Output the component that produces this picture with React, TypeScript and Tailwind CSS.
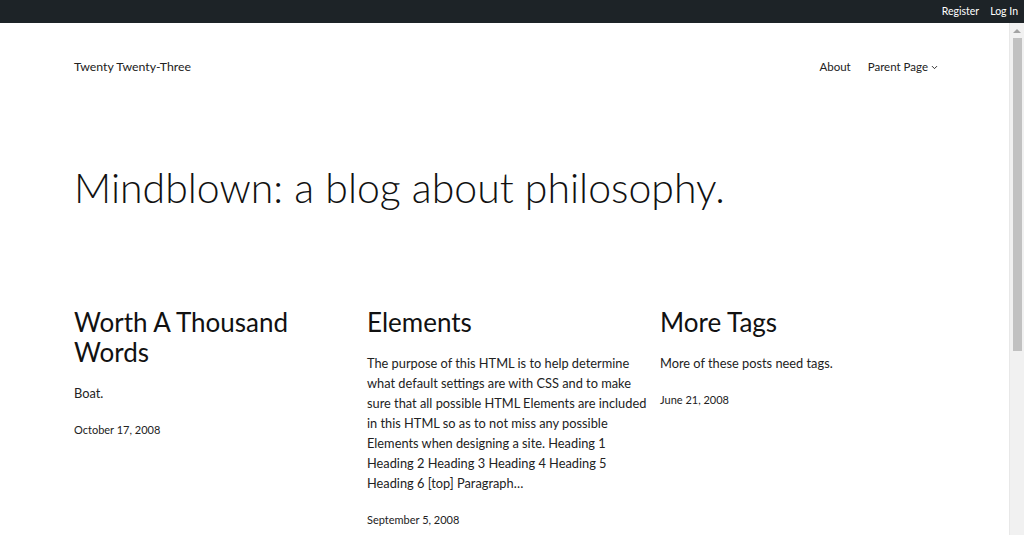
import { ChevronDown } from 'lucide-react';

interface PostProps {
  title: string;
  excerpt: string;
  date: string;
}

const posts: PostProps[] = [
  { title: 'Worth A Thousand Words', excerpt: 'Boat.', date: 'October 17, 2008' },
  {
    title: 'Elements',
    // line breaks follow the original wrap
    excerpt:
      'The purpose of this HTML is to help determine\nwhat default settings are with CSS and to make\nsure that all possible HTML Elements are included\nin this HTML so as to not miss any possible\nElements when designing a site. Heading 1\nHeading 2 Heading 3 Heading 4 Heading 5\nHeading 6 [top] Paragraph…',
    date: 'September 5, 2008',
  },
  { title: 'More Tags', excerpt: 'More of these posts need tags.', date: 'June 21, 2008' },
];

const PostCard = ({ title, excerpt, date }: PostProps) => (
  <article>
    <h2 className="text-[26px] leading-[30px] text-[#111]">{title}</h2>
    <p className="mt-[16px] whitespace-pre text-[12.8px] leading-[20px] text-[#222]">{excerpt}</p>
    <div className="mt-[17px] text-[11px] leading-[20px] text-[#222]">{date}</div>
  </article>
);

export default function App() {
  return (
    <div className="h-screen flex flex-col bg-white font-['Lato',sans-serif] text-[#111]">
      {/* admin bar */}
      <div className="h-[23px] shrink-0 bg-[#1d2327] flex items-center justify-end gap-[11px] pr-[6px] text-[10.5px] text-white">
        <span>Register</span>
        <span>Log In</span>
      </div>

      <div className="flex-1 flex min-h-0">
        <div className="flex-1 overflow-hidden">
          <div className="pl-[74px] pr-[70px]">
            <header className="h-[88px] flex items-center justify-between">
              <div className="text-[12.3px] text-[#222]">Twenty Twenty-Three</div>
              <nav className="flex items-center gap-[17px] text-[11.5px] text-[#222]">
                <span>About</span>
                <span className="flex items-center gap-[2px]">
                  Parent Page
                  <ChevronDown size={9} strokeWidth={2.5} />
                </span>
              </nav>
            </header>

            <h1 className="mt-[49px] text-[41px] leading-[56px] font-light text-[#111]">
              Mindblown: a blog about philosophy.
            </h1>

            <div className="mt-[91px] grid grid-cols-3 gap-[14px] pb-[120px]">
              {posts.map((p) => (
                <PostCard key={p.title} {...p} />
              ))}
            </div>
          </div>
        </div>

        {/* scrollbar */}
        <div className="w-[15px] shrink-0 bg-[#f1f1f1] flex flex-col items-center border-l border-[#e8e8e8]">
          <div className="h-[15px] flex items-center justify-center">
            <div className="w-0 h-0 border-l-[4px] border-r-[4px] border-b-[4px] border-l-transparent border-r-transparent border-b-[#a3a3a3]" />
          </div>
          <div className="w-[9px] h-[313px] bg-[#c1c1c1]" />
        </div>
      </div>
    </div>
  );
}
